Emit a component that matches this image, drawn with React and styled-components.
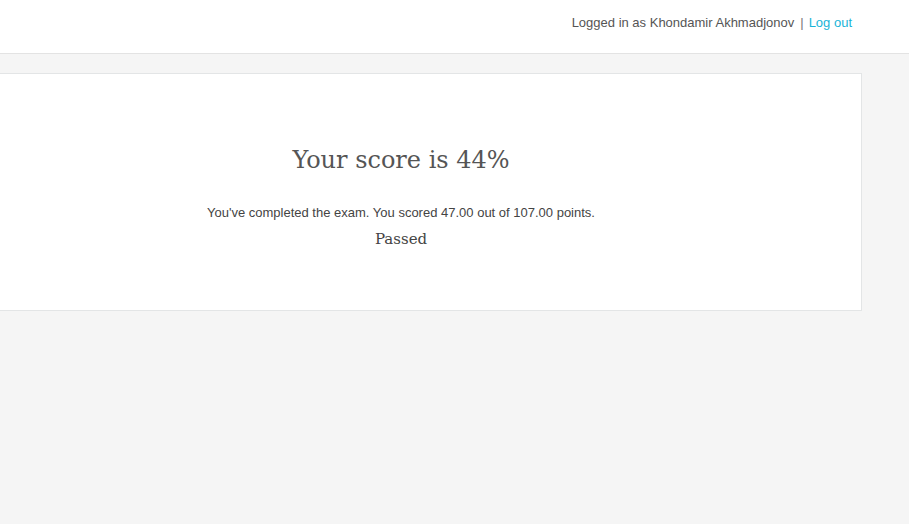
import React from "react";
import styled, { createGlobalStyle } from "styled-components";

const GlobalStyle = createGlobalStyle`
  html, body {
    margin: 0;
    padding: 0;
    background: #f5f5f5;
    font-family: "Liberation Sans", Arial, sans-serif;
    overflow: hidden;
  }
`;

export default () => {
  return (
    <>
      <GlobalStyle />
      <Header>
        <UserBar>
          <span>Logged in as Khondamir Akhmadjonov</span>
          <Separator>|</Separator>
          <LogOut href="#">Log out</LogOut>
        </UserBar>
      </Header>
      <Main>
        <ResultCard>
          <Title>Your score is 44%</Title>
          <Summary>
            You've completed the exam. You scored 47.00 out of 107.00 points.
          </Summary>
          <Status>Passed</Status>
        </ResultCard>
      </Main>
    </>
  );
};

const Header = styled.header`
  height: 53px;
  background: #ffffff;
  border-bottom: 1px solid #e3e3e3;
  display: flex;
  justify-content: flex-end;
  align-items: center;
  padding-right: 57px;
  box-sizing: content-box;
`;

const UserBar = styled.div`
  display: flex;
  align-items: center;
  font-size: 13px;
  color: #555555;
  margin-top: -8px;
`;

const Separator = styled.span`
  margin: 0 5px 0 6px;
  color: #777777;
`;

const LogOut = styled.a`
  color: #19b4d8;
  text-decoration: none;
`;

const Main = styled.main`
  padding-top: 19px;
`;

const ResultCard = styled.section`
  margin-left: -60px;
  width: 922px;
  height: 238px;
  background: #ffffff;
  border: 1px solid #e3e5e6;
  display: flex;
  flex-direction: column;
  align-items: center;
  box-sizing: border-box;
  padding-top: 68px;
`;

const Title = styled.h1`
  margin: 0;
  font-family: "DejaVu Serif", Georgia, serif;
  font-weight: normal;
  font-size: 24px;
  color: #555555;
  line-height: 36px;
`;

const Summary = styled.p`
  margin: 27px 0 0;
  font-size: 13px;
  color: #444444;
  line-height: 16px;
`;

const Status = styled.div`
  margin-top: 8px;
  font-family: "DejaVu Serif", Georgia, serif;
  font-size: 15px;
  color: #444444;
  line-height: 20px;
`;
